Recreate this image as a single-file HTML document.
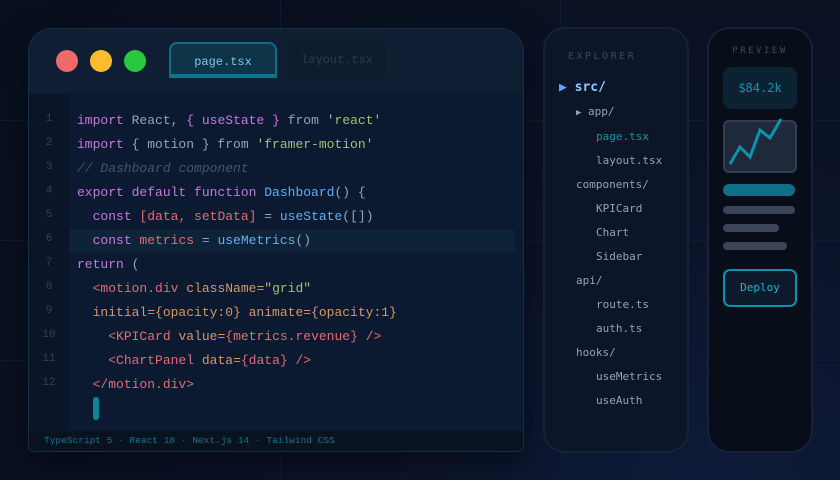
<!DOCTYPE html>
<html><head><style>
*{margin:0;padding:0;box-sizing:border-box}
body{width:840px;height:480px;overflow:hidden;background:#0a1122;position:relative;font-family:"Liberation Mono",monospace}
.bg{position:absolute;inset:0;background:radial-gradient(ellipse at 85% 100%,#0e1a38 0%,#0b1328 40%,#080f1e 100%)}
.gl{position:absolute;background:#101c30}
.win{position:absolute;left:28px;top:28px;width:496px;height:424px;border-radius:24px 24px 6px 6px;background:#0b1a30;border:1px solid #1a2d47;overflow:hidden;box-shadow:0 10px 30px rgba(0,0,0,.5)}
.hdr{position:absolute;left:0;top:0;right:0;height:64px;background:#0f1e33}
.dot{position:absolute;top:21px;width:22px;height:22px;border-radius:50%}
.tab{position:absolute;top:13px;height:36px;border-radius:8px 8px 0 0;font-size:12px;text-align:center;line-height:36px}
.gut{position:absolute;left:0;top:64px;width:40px;bottom:20px;background:#0a1628}
.ln{position:absolute;left:0;width:40px;text-align:center;color:#334155;font-size:11px}
.code{position:absolute;left:48px;font-size:13px;color:#94a3b8;white-space:pre}
.k{color:#c678dd}.s{color:#98c379}.f{color:#61afef}.r{color:#e06c75}.o{color:#d19a66}.c{color:#475569;font-style:italic}
.st{position:absolute;left:0;right:0;bottom:0;height:20px;background:#09131f;color:#0e7490;font-size:9.5px;line-height:20px;padding-left:15px}
.panel{position:absolute;border-radius:22px;border:2px solid #15223a}
.ex{font-family:"DejaVu Sans Mono",monospace;font-size:11px;color:#94a3b8;position:absolute;white-space:pre}
.bar{position:absolute;left:14px;height:8px;border-radius:4px;background:#3a4558}
</style></head><body>
<div class="bg"></div>
<div class="gl" style="left:0;right:0;top:120px;height:1px"></div>
<div class="gl" style="left:0;right:0;top:240px;height:1px"></div>
<div class="gl" style="left:0;right:0;top:360px;height:1px"></div>
<div class="gl" style="left:280px;top:0;bottom:0;width:1px"></div>
<div class="gl" style="left:560px;top:0;bottom:0;width:1px"></div>

<div class="win">
 <div class="hdr"></div>
 <div class="dot" style="left:27px;background:#ec6a6a"></div>
 <div class="dot" style="left:61px;background:#fbbd2e"></div>
 <div class="dot" style="left:95px;background:#28c840"></div>
 <div class="tab" style="left:140px;width:108px;background:#0f3347;border:2px solid #0e6d88;border-bottom:4px solid #0e7490;color:#7cc8ef">page.tsx</div>
 <div class="tab" style="left:258px;width:100px;background:#0f1c2e;color:#2e3b4d;border-radius:8px">layout.tsx</div>
 <div class="gut"></div>
 <div style="position:absolute;left:40px;right:8px;top:201px;height:22px;background:#0f2338"></div>
 <div class="ln" style="top:84px">1</div><div class="ln" style="top:108px">2</div><div class="ln" style="top:132px">3</div><div class="ln" style="top:156px">4</div><div class="ln" style="top:180px">5</div><div class="ln" style="top:204px">6</div><div class="ln" style="top:228px">7</div><div class="ln" style="top:252px">8</div><div class="ln" style="top:276px">9</div><div class="ln" style="top:300px">10</div><div class="ln" style="top:324px">11</div><div class="ln" style="top:348px">12</div>
 <div class="code" style="top:84px"><span class="k">import</span> React, <span class="k">{</span> <span class="k">useState</span> <span class="k">}</span> from <span class="s">'react'</span></div>
 <div class="code" style="top:108px"><span class="k">import</span> { motion } from <span class="s">'framer-motion'</span></div>
 <div class="code" style="top:132px"><span class="c">// Dashboard component</span></div>
 <div class="code" style="top:156px"><span class="k">export default function</span> <span class="f">Dashboard</span>() {</div>
 <div class="code" style="top:180px">  <span class="k">const</span> <span class="r">[data, setData]</span> = <span class="f">useState</span>([])</div>
 <div class="code" style="top:204px">  <span class="k">const</span> <span class="r">metrics</span> = <span class="f">useMetrics</span>()</div>
 <div class="code" style="top:228px"><span class="k">return</span> (</div>
 <div class="code" style="top:252px">  <span class="r">&lt;motion.div</span> <span class="o">className=</span><span class="s">"grid"</span></div>
 <div class="code" style="top:276px">  <span class="o">initial={opacity:0} animate={opacity:1}</span></div>
 <div class="code" style="top:300px">    <span class="r">&lt;KPICard</span> <span class="o">value=</span><span class="r">{metrics.revenue}</span> <span class="r">/&gt;</span></div>
 <div class="code" style="top:324px">    <span class="r">&lt;ChartPanel</span> <span class="o">data=</span><span class="r">{data}</span> <span class="r">/&gt;</span></div>
 <div class="code" style="top:348px">  <span class="r">&lt;/motion.div&gt;</span></div>
 <div style="position:absolute;left:64px;top:368px;width:6px;height:23px;border-radius:3px;background:#0e8599"></div>
 <div class="st">TypeScript 5 · React 18 · Next.js 14 · Tailwind CSS</div>
</div>

<div class="panel" style="left:543px;top:27px;width:146px;height:426px;background:#0b1628">
 <div class="ex" style="left:23px;top:22px;color:#3e4a5c;letter-spacing:2.5px;font-size:10px">EXPLORER</div>
 <div class="ex" style="left:14px;top:51px;color:#60a5fa;font-size:13px;font-weight:bold">▶ <span style="color:#93c5fd">src/</span></div>
 <div class="ex" style="left:31px;top:76px"><span style="font-size:9px">▶</span> app/</div>
 <div class="ex" style="left:51px;top:101px;color:#0e93ad">page.tsx</div>
 <div class="ex" style="left:51px;top:125px">layout.tsx</div>
 <div class="ex" style="left:31px;top:149px">components/</div>
 <div class="ex" style="left:51px;top:173px">KPICard</div>
 <div class="ex" style="left:51px;top:197px">Chart</div>
 <div class="ex" style="left:51px;top:221px">Sidebar</div>
 <div class="ex" style="left:31px;top:245px">api/</div>
 <div class="ex" style="left:51px;top:269px">route.ts</div>
 <div class="ex" style="left:51px;top:293px">auth.ts</div>
 <div class="ex" style="left:31px;top:317px">hooks/</div>
 <div class="ex" style="left:51px;top:341px">useMetrics</div>
 <div class="ex" style="left:51px;top:365px">useAuth</div>
</div>

<div class="panel" style="left:707px;top:27px;width:106px;height:426px;background:#070d19">
 <div class="ex" style="left:0;width:102px;text-align:center;top:17px;color:#3e4a5c;letter-spacing:2.5px;font-size:9px">PREVIEW</div>
 <div style="position:absolute;left:14px;top:38px;width:74px;height:42px;border-radius:8px;background:#0b2232;color:#0e93ad;font-family:'DejaVu Sans Mono',monospace;font-size:12px;text-align:center;line-height:42px">$84.2k</div>
 <div style="position:absolute;left:14px;top:91px;width:74px;height:53px;border-radius:6px;background:#1e293b;border:2px solid #323d4e"></div>
 <svg style="position:absolute;left:14px;top:85px" width="80" height="65"><polyline points="7,50 17,33 27,43 37,16 47,24 58,5" fill="none" stroke="#0e93ad" stroke-width="3" stroke-linejoin="miter"/></svg>
 <div class="bar" style="top:155px;width:72px;height:12px;border-radius:6px;background:#0e7086"></div>
 <div class="bar" style="top:177px;width:72px"></div>
 <div class="bar" style="top:195px;width:56px"></div>
 <div class="bar" style="top:213px;width:64px"></div>
 <div style="position:absolute;left:14px;top:240px;width:74px;height:38px;border-radius:7px;border:2px solid #0e93ad;background:#0c1a2c;color:#22b4d4;font-family:'DejaVu Sans Mono',monospace;font-size:11px;text-align:center;line-height:34px">Deploy</div>
</div>
</body></html>
